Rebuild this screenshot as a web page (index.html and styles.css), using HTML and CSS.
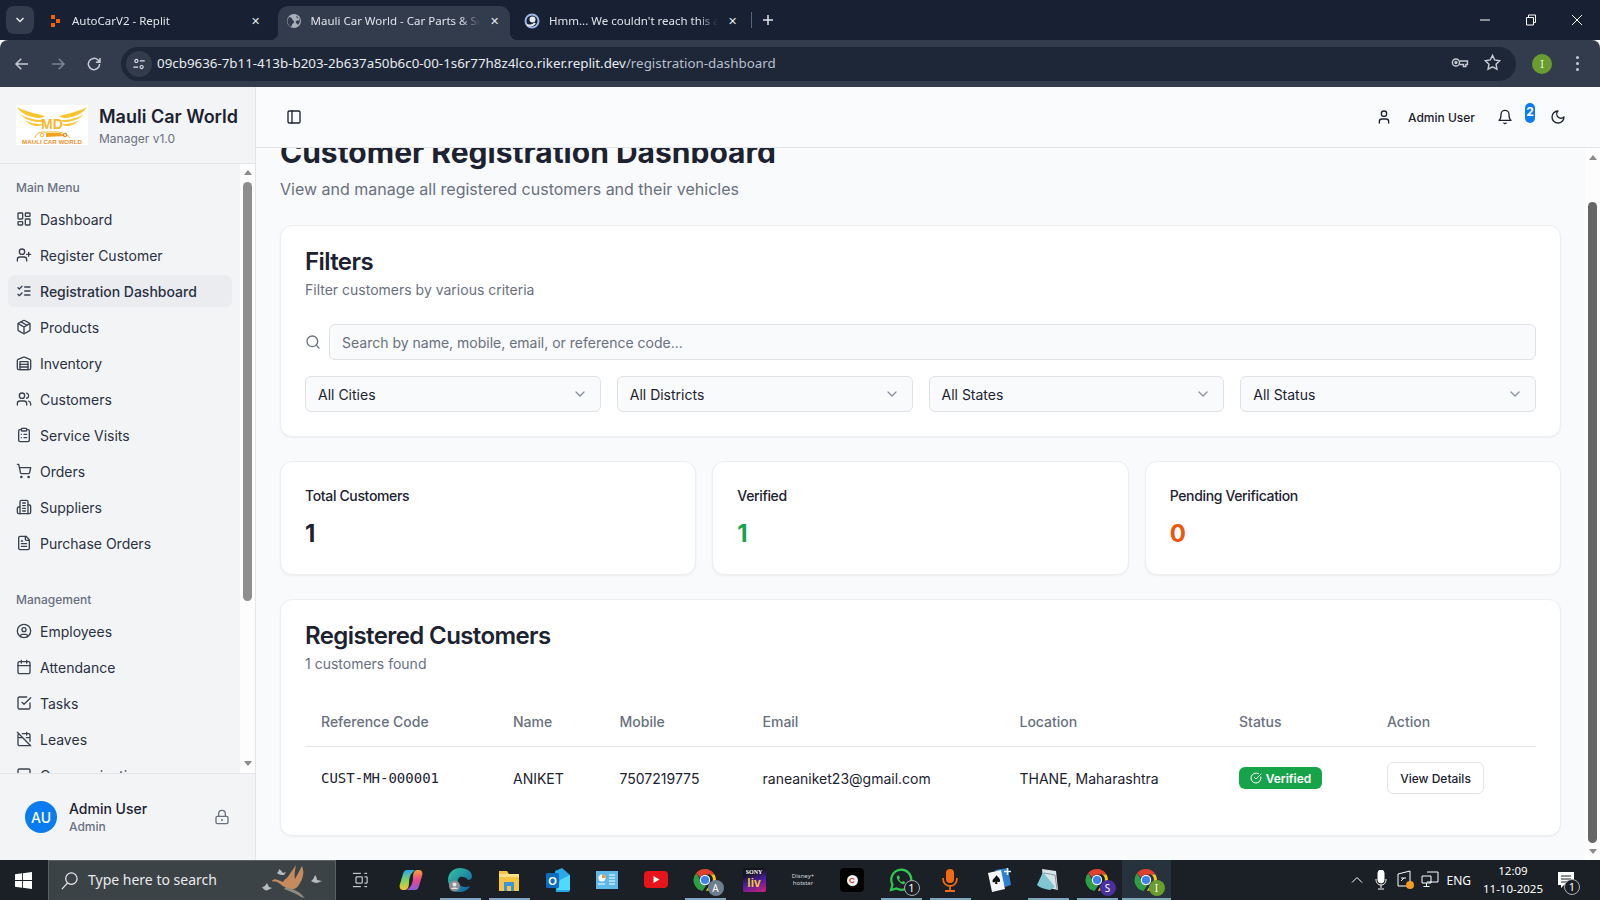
FILE: index.html
```html
<!DOCTYPE html>
<html lang="en">
<head>
    <meta charset="UTF-8">
    <meta name="viewport" content="width=device-width, initial-scale=1.0">
    <title>Mauli Car World - Car Parts &amp; Service</title>
    <link rel="stylesheet" href="styles.css">
</head>
<body>
    <!-- icon set -->
    <svg class="sprite" xmlns="http://www.w3.org/2000/svg">
        <symbol id="i-dashboard" viewBox="0 0 24 24"><rect x="3" y="3" width="7" height="9" rx="1"/><rect x="14" y="3" width="7" height="5" rx="1"/><rect x="14" y="12" width="7" height="9" rx="1"/><rect x="3" y="16" width="7" height="5" rx="1"/></symbol>
        <symbol id="i-user-plus" viewBox="0 0 24 24"><path d="M16 21v-2a4 4 0 0 0-4-4H6a4 4 0 0 0-4 4v2"/><circle cx="9" cy="7" r="4"/><path d="M19 8v6M22 11h-6"/></symbol>
        <symbol id="i-list-checks" viewBox="0 0 24 24"><path d="m3 17 2 2 4-4M3 7l2 2 4-4M13 6h8M13 12h8M13 18h8"/></symbol>
        <symbol id="i-package" viewBox="0 0 24 24"><path d="M11 21.73a2 2 0 0 0 2 0l7-4A2 2 0 0 0 21 16V8a2 2 0 0 0-1-1.73l-7-4a2 2 0 0 0-2 0l-7 4A2 2 0 0 0 3 8v8a2 2 0 0 0 1 1.73z"/><path d="M12 22V12M3.3 7l8.7 5 8.7-5M7.5 4.27l9 5.15"/></symbol>
        <symbol id="i-warehouse" viewBox="0 0 24 24"><path d="M22 8.35V20a2 2 0 0 1-2 2H4a2 2 0 0 1-2-2V8.35A2 2 0 0 1 3.26 6.5l8-3.2a2 2 0 0 1 1.48 0l8 3.2A2 2 0 0 1 22 8.35Z"/><path d="M6 18h12M6 14h12"/><rect x="6" y="10" width="12" height="12"/></symbol>
        <symbol id="i-users" viewBox="0 0 24 24"><path d="M16 21v-2a4 4 0 0 0-4-4H6a4 4 0 0 0-4 4v2"/><circle cx="9" cy="7" r="4"/><path d="M22 21v-2a4 4 0 0 0-3-3.87M16 3.13a4 4 0 0 1 0 7.75"/></symbol>
        <symbol id="i-clipboard" viewBox="0 0 24 24"><rect x="8" y="2" width="8" height="4" rx="1"/><path d="M16 4h2a2 2 0 0 1 2 2v14a2 2 0 0 1-2 2H6a2 2 0 0 1-2-2V6a2 2 0 0 1 2-2h2M12 11h4M12 16h4M8 11h.01M8 16h.01"/></symbol>
        <symbol id="i-cart" viewBox="0 0 24 24"><circle cx="8" cy="21" r="1"/><circle cx="19" cy="21" r="1"/><path d="M2.05 2.05h2l2.66 12.42a2 2 0 0 0 2 1.58h9.78a2 2 0 0 0 1.95-1.57l1.65-7.43H5.12"/></symbol>
        <symbol id="i-building" viewBox="0 0 24 24"><path d="M6 22V4a2 2 0 0 1 2-2h8a2 2 0 0 1 2 2v18Z"/><path d="M6 12H4a2 2 0 0 0-2 2v6a2 2 0 0 0 2 2h2M18 9h2a2 2 0 0 1 2 2v9a2 2 0 0 1-2 2h-2M10 6h4M10 10h4M10 14h4M10 18h4"/></symbol>
        <symbol id="i-file" viewBox="0 0 24 24"><path d="M15 2H6a2 2 0 0 0-2 2v16a2 2 0 0 0 2 2h12a2 2 0 0 0 2-2V7Z"/><path d="M14 2v4a2 2 0 0 0 2 2h4M10 9H8M16 13H8M16 17H8"/></symbol>
        <symbol id="i-circle-user" viewBox="0 0 24 24"><circle cx="12" cy="12" r="10"/><circle cx="12" cy="10" r="3"/><path d="M7 20.662V19a2 2 0 0 1 2-2h6a2 2 0 0 1 2 2v1.662"/></symbol>
        <symbol id="i-calendar" viewBox="0 0 24 24"><path d="M8 2v4M16 2v4M3 10h18"/><rect x="3" y="4" width="18" height="18" rx="2"/></symbol>
        <symbol id="i-check-square" viewBox="0 0 24 24"><path d="m9 11 3 3L22 4"/><path d="M21 12v7a2 2 0 0 1-2 2H5a2 2 0 0 1-2-2V5a2 2 0 0 1 2-2h11"/></symbol>
        <symbol id="i-calendar-off" viewBox="0 0 24 24"><path d="M4.2 4.2A2 2 0 0 0 3 6v14a2 2 0 0 0 2 2h14a2 2 0 0 0 1.82-1.18M21 15.5V6a2 2 0 0 0-2-2H9.5M16 2v4M3 10h7M21 10h-5.5M2 2l20 20"/></symbol>
        <symbol id="i-message" viewBox="0 0 24 24"><path d="M21 15a2 2 0 0 1-2 2H7l-4 4V5a2 2 0 0 1 2-2h14a2 2 0 0 1 2 2z"/></symbol>
        <symbol id="i-chevron" viewBox="0 0 24 24"><path d="m6 9 6 6 6-6"/></symbol>
        <symbol id="i-chrome" viewBox="0 0 24 24">
            <path d="M12 1a11 11 0 0 1 9.5 5.5H12a5.5 5.5 0 0 0-5 3.2L3.2 5A11 11 0 0 1 12 1Z" fill="#e0412f"/>
            <path d="M21.5 6.5A11 11 0 0 1 12.8 23l4-6.6a5.5 5.5 0 0 0 0-9.9Z" fill="#f5c518"/>
            <path d="M3.2 5 7.6 12.6a5.5 5.5 0 0 0 5.6 4.8L9.5 23A11 11 0 0 1 3.2 5Z" fill="#2f9e44"/>
            <circle cx="12" cy="12" r="5.2" fill="#fff"/>
            <circle cx="12" cy="12" r="4.1" fill="#3f82ee"/>
        </symbol>
        <symbol id="i-wing" viewBox="0 0 36 24">
            <path d="M1 2C8 6 18 8 29 11 26 13 24 13 22 13 14 12 5 9 1 2Z"/>
            <path d="M4 9C10 13 18 15 27 15 26 17 24 17 21 17 14 16 8 14 4 9Z"/>
            <path d="M9 15C13 18 19 19 26 19 25 21 22 21 19 21 15 20 11 18 9 15Z"/>
        </symbol>
    </svg>

    <!-- browser tabs -->
    <div class="tabstrip">
        <button class="tab-menu"><svg class="icon-10" viewBox="0 0 24 24"><path d="m5 8 7 7 7-7"/></svg></button>
        <div class="tab">
            <svg class="tab-icon" viewBox="0 0 16 16"><path d="M4 2h4v4H4zM9 6h4v4H9zM4 10h4v4H4z" fill="#f26207"/></svg>
            <span class="tab-title">AutoCarV2 - Replit</span>
            <span class="tab-close">&#10005;</span>
        </div>
        <div class="tab tab-active">
            <svg class="tab-icon" viewBox="0 0 16 16"><circle cx="8" cy="8" r="7" fill="#aab0ba"/><path d="M3 4c2 0 3 1 3 2s2 1 2 3-2 1-2 3l-1 2C3 13 1 10 1.500 7ZM10 2c1 1 0 2 1 3s3 0 3.500 1.500C13 8 11 7 10 8s1 3 2 4c1-1 2-3 2-5" fill="#333c4d"/></svg>
            <span class="tab-title">Mauli Car World - Car Parts &amp; Service</span>
            <span class="tab-close">&#10005;</span>
        </div>
        <div class="tab">
            <svg class="tab-icon" viewBox="0 0 16 16"><circle cx="8" cy="8" r="6.500" fill="none" stroke="#9db8e8" stroke-width="2"/><circle cx="8.500" cy="6.500" r="3" fill="#e6e9ef"/><path d="M3 12c3 1 6 1 8-2" stroke="#e6e9ef" stroke-width="2" fill="none"/></svg>
            <span class="tab-title">Hmm... We couldn't reach this app</span>
            <span class="tab-close">&#10005;</span>
        </div>
        <span class="tab-sep"></span>
        <svg class="tab-new" viewBox="0 0 12 12"><path d="M6 1v10M1 6h10"/></svg>
        <div class="win-btns">
            <svg viewBox="0 0 12 12"><path d="M1 6h10"/></svg>
            <svg viewBox="0 0 12 12"><path d="M1.500 3.500h7v7.500h-7zM3.500 3.500V1h7v7.500H8.500"/></svg>
            <svg viewBox="0 0 12 12"><path d="m1 1 10 10M11 1 1 11"/></svg>
        </div>
    </div>

    <!-- address bar -->
    <div class="toolbar">
        <svg class="nav-btn" viewBox="0 0 24 24"><path d="M20 12H5M11 5l-7 7 7 7"/></svg>
        <svg class="nav-btn nav-off" viewBox="0 0 24 24"><path d="M4 12h15M13 5l7 7-7 7"/></svg>
        <svg class="nav-btn" viewBox="0 0 24 24"><path d="M19.500 12a7.500 7.500 0 1 1-2.200-5.300L20 9.500M20 4v5.500h-5.500"/></svg>
        <div class="urlbar">
            <span class="site-btn">
                <svg viewBox="0 0 16 16"><circle cx="5" cy="4.500" r="1.800"/><path d="M9 4.500h5.500M1.500 11.500H7"/><circle cx="11" cy="11.500" r="1.800"/></svg>
            </span>
            <span class="url">09cb9636-7b11-413b-b203-2b637a50b6c0-00-1s6r77h8z4lco.riker.replit.dev<span class="url-path">/registration-dashboard</span></span>
            <svg class="url-icon" viewBox="0 0 24 24"><circle cx="7.500" cy="12" r="4.500"/><circle cx="7.500" cy="12" r="1.200"/><path d="M12 10h10v4.500h-2V17h-3v-2.500h-5"/></svg>
            <svg class="url-icon" viewBox="0 0 24 24"><path d="m12 3 2.800 5.800 6.200.9-4.500 4.400 1.100 6.300L12 17.400l-5.600 3 1.100-6.300L3 9.700l6.200-.9Z"/></svg>
        </div>
        <span class="profile">I</span>
        <span class="kebab"><i></i><i></i><i></i></span>
    </div>

    <div class="app">
        <aside class="sidebar">
            <div class="brand">
                <svg class="logo" viewBox="0 0 72 40">
                    <rect width="72" height="40" fill="#fff"/>
                    <use href="#i-wing" width="36" height="24" fill="#f9c430"/>
                    <use href="#i-wing" width="36" height="24" fill="#f9c430" transform="matrix(-1 0 0 1 72 0)"/>
                    <text x="36" y="24" text-anchor="middle" class="logo-md">MD</text>
                    <path d="M19 33c1-4 4-6 8-6h14c4 0 10 2 13 6" fill="none" stroke="#f4b531" stroke-width="1"/>
                    <path d="M30 28h14l5 3-19 1Z" fill="#f2a224"/>
                    <circle cx="26" cy="30" r="1.800" fill="none" stroke="#f4b531"/>
                    <circle cx="49" cy="30" r="1.800" fill="none" stroke="#e8752b"/>
                    <text x="36" y="39" text-anchor="middle" class="logo-name">MAULI CAR WORLD</text>
                </svg>
                <div>
                    <div class="brand-name">Mauli Car World</div>
                    <div class="brand-sub">Manager v1.0</div>
                </div>
            </div>

            <div class="side-scroll">
                <nav class="side-nav">
                    <div class="nav-group">
                        <div class="nav-label">Main Menu</div>
                        <a class="nav-item"><svg class="icon"><use href="#i-dashboard"/></svg>Dashboard</a>
                        <a class="nav-item"><svg class="icon"><use href="#i-user-plus"/></svg>Register Customer</a>
                        <a class="nav-item active"><svg class="icon"><use href="#i-list-checks"/></svg>Registration Dashboard</a>
                        <a class="nav-item"><svg class="icon"><use href="#i-package"/></svg>Products</a>
                        <a class="nav-item"><svg class="icon"><use href="#i-warehouse"/></svg>Inventory</a>
                        <a class="nav-item"><svg class="icon"><use href="#i-users"/></svg>Customers</a>
                        <a class="nav-item"><svg class="icon"><use href="#i-clipboard"/></svg>Service Visits</a>
                        <a class="nav-item"><svg class="icon"><use href="#i-cart"/></svg>Orders</a>
                        <a class="nav-item"><svg class="icon"><use href="#i-building"/></svg>Suppliers</a>
                        <a class="nav-item"><svg class="icon"><use href="#i-file"/></svg>Purchase Orders</a>
                    </div>
                    <div class="nav-group">
                        <div class="nav-label">Management</div>
                        <a class="nav-item"><svg class="icon"><use href="#i-circle-user"/></svg>Employees</a>
                        <a class="nav-item"><svg class="icon"><use href="#i-calendar"/></svg>Attendance</a>
                        <a class="nav-item"><svg class="icon"><use href="#i-check-square"/></svg>Tasks</a>
                        <a class="nav-item"><svg class="icon"><use href="#i-calendar-off"/></svg>Leaves</a>
                        <a class="nav-item"><svg class="icon"><use href="#i-message"/></svg>Communication</a>
                    </div>
                </nav>
                <div class="scrollbar side-bar">
                    <span class="arrow-up"></span>
                    <span class="thumb"></span>
                    <span class="arrow-down"></span>
                </div>
            </div>

            <div class="side-user">
                <span class="avatar">AU</span>
                <div class="side-user-text">
                    <div class="side-user-name">Admin User</div>
                    <div class="side-user-role">Admin</div>
                </div>
                <svg class="icon lock" viewBox="0 0 24 24"><rect x="3" y="11" width="18" height="11" rx="2"/><path d="M7 11V7a5 5 0 0 1 10 0v4"/><circle cx="12" cy="16.500" r=".6"/></svg>
            </div>
        </aside>

        <div class="main">
            <header class="topbar">
                <svg class="icon panel-btn" viewBox="0 0 24 24"><rect x="3" y="3" width="18" height="18" rx="2"/><path d="M9 3v18"/></svg>
                <div class="topbar-right">
                    <svg class="icon" viewBox="0 0 24 24"><path d="M19 21v-2a4 4 0 0 0-4-4H9a4 4 0 0 0-4 4v2"/><circle cx="12" cy="7" r="4"/></svg>
                    <span class="topbar-user">Admin User</span>
                    <span class="bell">
                        <svg class="icon" viewBox="0 0 24 24"><path d="M6 8a6 6 0 0 1 12 0c0 7 3 9 3 9H3s3-2 3-9"/><path d="M10.300 21a1.940 1.940 0 0 0 3.400 0"/></svg>
                        <span class="bell-badge">2</span>
                    </span>
                    <svg class="icon moon" viewBox="0 0 24 24"><path d="M12 3a6 6 0 0 0 9 9 9 9 0 1 1-9-9Z"/></svg>
                </div>
            </header>

            <div class="page-wrap">
                <main class="page">
                    <h1>Customer Registration Dashboard</h1>
                    <p class="page-sub">View and manage all registered customers and their vehicles</p>

                    <section class="card filters">
                        <h2>Filters</h2>
                        <p class="card-sub">Filter customers by various criteria</p>
                        <div class="search-row">
                            <svg class="icon search-icon" viewBox="0 0 24 24"><circle cx="11" cy="11" r="8"/><path d="m21 21-4.300-4.300"/></svg>
                            <div class="field search-field">Search by name, mobile, email, or reference code...</div>
                        </div>
                        <div class="select-row">
                            <div class="field select">All Cities<svg class="icon chev"><use href="#i-chevron"/></svg></div>
                            <div class="field select">All Districts<svg class="icon chev"><use href="#i-chevron"/></svg></div>
                            <div class="field select">All States<svg class="icon chev"><use href="#i-chevron"/></svg></div>
                            <div class="field select">All Status<svg class="icon chev"><use href="#i-chevron"/></svg></div>
                        </div>
                    </section>

                    <section class="stats">
                        <div class="card stat">
                            <div class="stat-label">Total Customers</div>
                            <div class="stat-value">1</div>
                        </div>
                        <div class="card stat">
                            <div class="stat-label">Verified</div>
                            <div class="stat-value green">1</div>
                        </div>
                        <div class="card stat">
                            <div class="stat-label">Pending Verification</div>
                            <div class="stat-value orange">0</div>
                        </div>
                    </section>

                    <section class="card customers">
                        <h2>Registered Customers</h2>
                        <p class="card-sub">1 customers found</p>
                        <table class="table">
                            <colgroup>
                                <col class="col-ref"><col class="col-name"><col class="col-mobile"><col class="col-email"><col class="col-loc"><col class="col-status"><col class="col-action">
                            </colgroup>
                            <thead>
                                <tr><th>Reference Code</th><th>Name</th><th>Mobile</th><th>Email</th><th>Location</th><th>Status</th><th>Action</th></tr>
                            </thead>
                            <tbody>
                                <tr>
                                    <td class="mono">CUST-MH-000001</td>
                                    <td>ANIKET</td>
                                    <td>7507219775</td>
                                    <td>raneaniket23@gmail.com</td>
                                    <td>THANE, Maharashtra</td>
                                    <td><span class="badge"><svg class="icon-12" viewBox="0 0 24 24"><path d="M21.801 10A10 10 0 1 1 17 3.335"/><path d="m9 11 3 3L22 4"/></svg>Verified</span></td>
                                    <td><button class="btn">View Details</button></td>
                                </tr>
                            </tbody>
                        </table>
                    </section>
                </main>
                <div class="scrollbar page-bar">
                    <span class="arrow-up"></span>
                    <span class="thumb"></span>
                    <span class="arrow-down"></span>
                </div>
            </div>
        </div>
    </div>

    <!-- windows taskbar -->
    <div class="taskbar">
        <svg class="start" viewBox="0 0 18 18"><path d="M0 2.500 7.400 1.400v7.200H0ZM8.300 1.300 18 0v8.600H8.300ZM0 9.500h7.400v7.200L0 15.600ZM8.300 9.500H18V18l-9.700-1.400Z" fill="#fff"/></svg>
        <div class="task-search">
            <svg class="task-search-icon" viewBox="0 0 20 20"><circle cx="12" cy="8" r="6"/><path d="M8 12.500 2 19"/></svg>
            <span>Type here to search</span>
            <svg class="goose" viewBox="0 0 72 36">
                <path d="M22 6c2 1 3 3 4 4l3-1-2 3c-2 0-5 0-7-2 1-1 2-2 2-4Z" fill="#b8bcc0"/>
                <path d="M5 24c2 0 3-1 5-4l2 4 3 1-4 2c-2 1-4 0-6-3Z" fill="#b8bcc0"/>
                <path d="M58 12c1 1 2 3 2 5l5 1-5 2c-2 0-4-1-6-2 2-1 3-3 4-6Z" fill="#b8bcc0"/>
                <path d="M39 2c-1 5-2 10-1 14l7-13c2 5 2 11-2 17-2 4-5 7-10 6-6-1-9-5-13-7-2-1-4 0-5-1 1-2 4-2 6-1l5 2c1-2 2-3 4-4 3-4 6-9 9-13Z" fill="#c58a5e"/>
                <path d="M27 26c5 2 11 4 17 8l4 1-5-5c-4-3-10-5-14-6Z" fill="#8e8a7e"/>
            </svg>
        </div>
        <span class="task-cell task-view">
            <svg viewBox="0 0 18 18"><path d="M4.500 5.500h7v7h-7zM1 1.500h9M1 16.500h9M14 1.500h3M14 16.500h3M14 5.500h3v7h-3"/></svg>
        </span>
        <span class="task-cell">
            <svg viewBox="0 0 24 24">
                <defs>
                    <linearGradient id="cp" x1="0" y1="0" x2="0" y2="1"><stop offset="0" stop-color="#27a7e7"/><stop offset=".55" stop-color="#86d35a"/><stop offset="1" stop-color="#f9c22e"/></linearGradient>
                    <linearGradient id="cp2" x1="0" y1="0" x2="0" y2="1"><stop offset="0" stop-color="#f9a13a"/><stop offset=".5" stop-color="#e8478b"/><stop offset="1" stop-color="#8a5be0"/></linearGradient>
                </defs>
                <path d="M8 2h8l-3 3c-2 2-3 6-3 10 0 3-1 7-4 7H4c-3 0-4-3-3-6l3-10C5 3 6 2 8 2Z" fill="url(#cp)"/>
                <path d="M16 22H8l3-3c2-2 3-6 3-10 0-3 1-7 4-7h2c3 0 4 3 3 6l-3 10c-1 3-2 4-4 4Z" fill="url(#cp2)"/>
            </svg>
        </span>
        <span class="task-cell running">
            <svg viewBox="0 0 24 24">
                <defs><linearGradient id="ed" x1="0" y1="0" x2="1" y2="1"><stop offset="0" stop-color="#36c5a0"/><stop offset="1" stop-color="#0c59a4"/></linearGradient></defs>
                <path d="M12 0C5 0 0 5 0 12c0 6 5 12 11 12 5 0 9-2 11-6-4 2-10 1-12-3-1-2 0-5 2-6 3-1 7 1 8 3 2 0 4-1 4-4C24 4 19 0 12 0Z" fill="url(#ed)"/>
                <circle cx="6.500" cy="18" r="5.500" fill="#8d9196"/><circle cx="6.500" cy="16.500" r="2" fill="#e4e6e8"/><path d="M3 21c1-2 6-2 7 0Z" fill="#e4e6e8"/>
            </svg>
        </span>
        <span class="task-cell running">
            <svg viewBox="0 0 24 24"><path d="M2 3h8l2 3h10v17H2Z" fill="#f6c544"/><path d="M2 6h20v3H2Z" fill="#fbe08a"/><path d="M7 23v-9h10v9h-3v-5h-4v5Z" fill="#3a96d8"/></svg>
        </span>
        <span class="task-cell">
            <svg viewBox="0 0 24 24"><path d="M9 3l7-3 8 7v15a2 2 0 0 1-2 2H10Z" fill="#28a8ea"/><path d="M14 12l10-5v15H11Z" fill="#50d9ff"/><rect y="5" width="13" height="15" rx="1.500" fill="#0f6cbd"/><text x="6.500" y="16.500" text-anchor="middle" class="task-o">O</text></svg>
        </span>
        <span class="task-cell">
            <svg viewBox="0 0 24 24"><rect x="1" y="3" width="22" height="18" fill="#5fb9e8"/><circle cx="7" cy="10" r="3.500" fill="#fff"/><path d="M7 10V6.500A3.500 3.500 0 0 1 10.500 10Z" fill="#f39a2b"/><path d="M3 16h7M14 7h6M14 10h6M14 13h6M14 16h6" stroke="#fff" stroke-width="1.200"/></svg>
        </span>
        <span class="task-cell">
            <svg viewBox="0 0 24 24"><rect y="3" width="24" height="17" rx="4" fill="#e8141c"/><path d="m9.500 8 6 3.500-6 3.500Z" fill="#fff"/></svg>
        </span>
        <span class="task-cell running">
            <svg viewBox="0 0 24 24"><use href="#i-chrome"/></svg>
            <span class="task-dot dot-a">A</span>
        </span>
        <span class="task-cell">
            <span class="sony"><b>SONY</b><em>liv</em></span>
        </span>
        <span class="task-cell">
            <span class="hotstar">Disney+<br>hotstar</span>
        </span>
        <span class="task-cell">
            <span class="black-app"><i>C</i></span>
        </span>
        <span class="task-cell running">
            <svg viewBox="0 0 24 24"><path d="M2 22l1.500-5.500A10 10 0 1 1 7.500 20.500Z" fill="none" stroke="#2fc94f" stroke-width="2.200"/><path d="M8.500 7.500c-1 1-1 3 1 5.500s4 3.500 5.500 3c1-.5 1.500-1.500 1-2l-2-1-1 1c-1 0-3-2-3-3l1-1-1-2.500Z" fill="#2fc94f"/></svg>
            <span class="task-dot dot-count">1</span>
        </span>
        <span class="task-cell running">
            <svg viewBox="0 0 24 24"><rect x="8" y="1" width="8" height="14" rx="4" fill="#f26a13"/><path d="M5 10c0 5 3 8 7 8s7-3 7-8M12 18v4M7 23h10" fill="none" stroke="#f26a13" stroke-width="1.800"/></svg>
        </span>
        <span class="task-cell">
            <svg viewBox="0 0 24 24"><path d="m8 2 13-2 3 17-6 2Z" fill="#2f7fd0"/><path d="M1 5l13-3 4 19-13 3Z" fill="#f3f5f7"/><path d="M9.500 7c1 2 4 3.500 3.500 6-.3 1.500-2 1.500-3 .5l.5 2.500H8l.5-2.500c-1 1.300-3 1.300-3-.5 0-2 3-3.500 4-6Z" fill="#111"/><path d="M20.500 0v7M17 3.500h7" stroke="#dff0ff" stroke-width="1.600"/></svg>
        </span>
        <span class="task-cell running">
            <svg viewBox="0 0 24 24"><path d="M6 1l14 2 2 19-14-3Z" fill="#d7e4ea"/><path d="M7 4l-6 13c3 3 8 4 13 5l5-3Z" fill="#7fc6d2"/><path d="M8 5l11 2 2 14" fill="none" stroke="#8d979c"/></svg>
        </span>
        <span class="task-cell running">
            <svg viewBox="0 0 24 24"><use href="#i-chrome"/></svg>
            <span class="task-dot dot-s">S</span>
        </span>
        <span class="task-cell running current">
            <svg viewBox="0 0 24 24"><use href="#i-chrome"/></svg>
            <span class="task-dot dot-i">I</span>
        </span>

        <div class="tray">
            <svg class="tray-chev" viewBox="0 0 12 12"><path d="m1 8.500 5-5 5 5"/></svg>
            <svg class="tray-mic" viewBox="0 0 12 20"><rect x="3" y="0" width="6" height="13" rx="3" fill="#fff"/><path d="M1 9c0 4 2 6 5 6s5-2 5-6M6 15v3M3 19h6"/></svg>
            <svg class="tray-icon" viewBox="0 0 18 20"><path d="M1 4 13 1v15H1ZM4 8h5M4 11l3-3"/><circle cx="13" cy="15" r="4" fill="#f59a23" stroke="none"/></svg>
            <svg class="tray-icon tray-net" viewBox="0 0 18 20"><path d="M6 2h11v10H6M1 6h9v7H1ZM5.500 13v3M2.500 16.500h6"/></svg>
            <span class="tray-lang">ENG</span>
            <div class="tray-clock"><span>12:09</span><span>11-10-2025</span></div>
            <span class="tray-note">
                <svg viewBox="0 0 18 18"><path d="M1 1h16v13H7l-3 3v-3H1Z" fill="#fff"/><path d="M4 5h10M4 8h10M4 11h7" stroke="#1a2026" stroke-width="1.200"/></svg>
                <span class="task-dot dot-count note-count">1</span>
            </span>
        </div>
    </div>
</body>
</html>
```

FILE: styles.css
```css
* {
    box-sizing: border-box;
}

html, body {
    margin: 0;
    height: 100%;
}

body {
    width: 1600px;
    height: 900px;
    display: flex;
    flex-direction: column;
    overflow: hidden;
    font-family: Inter, "Liberation Sans", sans-serif;
    color: #1c2230;
    background: #f9fafb;
}

.sprite {
    display: none;
}

.icon {
    width: 16px;
    height: 16px;
    flex: none;
    fill: none;
    stroke: currentColor;
    stroke-width: 2;
    stroke-linecap: round;
    stroke-linejoin: round;
}

/* browser chrome */
.tabstrip {
    height: 40px;
    flex: none;
    display: flex;
    align-items: flex-end;
    background: #182133;
    color: #dfe3ea;
    font-family: "Noto Sans", sans-serif;
    font-size: 11.500px;
}

.tab-menu {
    width: 28px;
    height: 28px;
    margin: 0 5px 6px 6px;
    padding: 0;
    border: 0;
    border-radius: 8px;
    background: #333c4d;
    display: flex;
    align-items: center;
    justify-content: center;
}

.icon-10 {
    width: 12px;
    height: 12px;
    fill: none;
    stroke: #e8ebf0;
    stroke-width: 3;
}

.tab {
    position: relative;
    width: 232px;
    height: 34px;
    margin-right: 6.500px;
    padding: 0 0 5px 8px;
    display: flex;
    align-items: center;
    border-radius: 10px 10px 0 0;
}

.tab-active {
    background: #333c4d;
}

.tab-active::before,
.tab-active::after {
    content: "";
    position: absolute;
    bottom: 0;
    width: 8px;
    height: 8px;
}

.tab-active::before {
    left: -8px;
    background: radial-gradient(circle at 0 0, transparent 8px, #333c4d 8.500px);
}

.tab-active::after {
    right: -8px;
    background: radial-gradient(circle at 100% 0, transparent 8px, #333c4d 8.500px);
}

.tab-icon {
    width: 16px;
    height: 16px;
    flex: none;
    margin-right: 9px;
}

.tab-title {
    width: 169px;
    white-space: nowrap;
    overflow: hidden;
    -webkit-mask-image: linear-gradient(to right, #000 88%, transparent);
    mask-image: linear-gradient(to right, #000 88%, transparent);
}

.tab-close {
    margin-left: 10px;
    font-size: 11px;
    color: #e4e7ec;
}

.tab-sep {
    width: 1px;
    height: 16px;
    margin: 0 0 12px -4px;
    background: #5a6374;
}

.tab-new {
    width: 12px;
    height: 12px;
    margin: 0 0 14px 10px;
    fill: none;
    stroke: #dfe3ea;
    stroke-width: 1.500;
}

.win-btns {
    margin-left: auto;
    margin-bottom: 14px;
    display: flex;
    gap: 34px;
    padding-right: 17px;
}

.win-btns svg {
    width: 12px;
    height: 12px;
    fill: none;
    stroke: #fff;
    stroke-width: 1;
}

.toolbar {
    height: 47px;
    flex: none;
    display: flex;
    align-items: center;
    padding: 0 13px;
    background: #333c4d;
    border-radius: 8px 8px 0 0;
}

.nav-btn {
    width: 18px;
    height: 18px;
    margin-right: 18px;
    fill: none;
    stroke: #c6cbd4;
    stroke-width: 2;
}

.nav-off {
    stroke: #7c8493;
}

.urlbar {
    width: 1395px;
    height: 34px;
    flex: none;
    display: flex;
    align-items: center;
    padding: 0 14px 2px 5px;
    border-radius: 17px;
    background: #1e2738;
    color: #e8ebf0;
    font-family: "Noto Sans", sans-serif;
    font-size: 13.350px;
}

.site-btn {
    width: 26px;
    height: 26px;
    margin: 2px 5px 0 0;
    border-radius: 50%;
    background: #333c4d;
    display: flex;
    align-items: center;
    justify-content: center;
}

.site-btn svg {
    width: 14px;
    height: 14px;
    fill: none;
    stroke: #dfe3ea;
    stroke-width: 1.300;
}

.url {
    flex: 1;
    white-space: nowrap;
}

.url-path {
    color: #b8bfcb;
}

.url-icon {
    width: 19px;
    height: 19px;
    margin-left: 14px;
    fill: none;
    stroke: #c6cbd4;
    stroke-width: 1.800;
}

.profile {
    width: 20px;
    height: 20px;
    margin-left: 16px;
    border-radius: 50%;
    background: #6a9c2f;
    color: #e9f2dc;
    font: 11px "Noto Sans", sans-serif;
    display: flex;
    align-items: center;
    justify-content: center;
}

.kebab {
    margin-left: 24px;
    display: flex;
    flex-direction: column;
    gap: 3px;
}

.kebab i {
    width: 3px;
    height: 3px;
    border-radius: 50%;
    background: #c6cbd4;
}

/* app shell */
.app {
    height: 773px;
    flex: none;
    display: flex;
}

.sidebar {
    width: 256px;
    flex: none;
    display: flex;
    flex-direction: column;
    background: #f3f4f6;
    border-right: 1px solid #e3e5e9;
}

.brand {
    height: 77px;
    flex: none;
    display: flex;
    align-items: center;
    gap: 11px;
    padding: 0 16px;
    border-bottom: 1px solid #e3e5e9;
}

.logo {
    width: 72px;
    height: 40px;
    flex: none;
}

.logo-md {
    font: 700 14px "Liberation Sans", sans-serif;
    fill: #f7b733;
}

.logo-name {
    font: 700 6.200px "Liberation Sans", sans-serif;
    fill: #ee8f2b;
}

.brand-name {
    font-size: 18px;
    line-height: 28px;
    font-weight: 600;
    white-space: nowrap;
}

.brand-sub {
    font-size: 12px;
    line-height: 16px;
    color: #697080;
}

.side-scroll {
    flex: 1;
    min-height: 0;
    display: flex;
    overflow: hidden;
}

.side-nav {
    flex: 1;
    min-width: 0;
    padding: 7px 8px;
}

.nav-group {
    padding-bottom: 20px;
}

.nav-label {
    height: 32px;
    padding-left: 8px;
    display: flex;
    align-items: center;
    font-size: 12px;
    font-weight: 500;
    color: #697080;
}

.nav-item {
    height: 32px;
    margin-bottom: 4px;
    padding-left: 8px;
    display: flex;
    align-items: center;
    gap: 8px;
    border-radius: 6px;
    font-size: 14px;
    color: #2a3142;
}

.nav-item .icon {
    color: #3a4150;
}

.nav-item.active {
    background: #ebecf0;
    font-weight: 500;
}

.scrollbar {
    width: 15px;
    flex: none;
    display: flex;
    flex-direction: column;
    align-items: center;
    background: #fdfdfd;
}

.arrow-up,
.arrow-down {
    width: 0;
    height: 0;
    flex: none;
    border-left: 4.500px solid transparent;
    border-right: 4.500px solid transparent;
}

.arrow-up {
    border-bottom: 5px solid #8a8a8a;
}

.arrow-down {
    border-top: 5px solid #8a8a8a;
}

.thumb {
    width: 9px;
    border-radius: 4.500px;
}

.side-bar {
    padding-top: 6px;
}

.side-bar .thumb {
    height: 419px;
    margin: 7px 0 160px;
    background: #8e8e8e;
}

.page-bar {
    padding-top: 7px;
}

.page-bar .thumb {
    height: 641px;
    margin: 42px 0 6px;
    background: #666;
}

.side-user {
    height: 87px;
    flex: none;
    display: flex;
    align-items: center;
    padding: 0 25px;
    border-top: 1px solid #e3e5e9;
}

.avatar {
    width: 32px;
    height: 32px;
    flex: none;
    border-radius: 50%;
    background: #0a7cf0;
    color: #fff;
    font-size: 14px;
    font-weight: 500;
    display: flex;
    align-items: center;
    justify-content: center;
}

.side-user-text {
    margin-left: 12px;
    flex: 1;
}

.side-user-name {
    font-size: 14px;
    line-height: 18px;
    font-weight: 500;
}

.side-user-role {
    margin-top: 1px;
    font-size: 12px;
    line-height: 16px;
    font-weight: 500;
    color: #697080;
}

.lock {
    color: #697080;
}

.main {
    flex: 1;
    min-width: 0;
    display: flex;
    flex-direction: column;
}

.topbar {
    height: 61px;
    flex: none;
    display: flex;
    align-items: center;
    justify-content: space-between;
    padding: 0 34px 0 30px;
    background: #fafbfc;
    border-bottom: 1px solid #e3e5e9;
}

.topbar-right {
    display: flex;
    align-items: center;
}

.topbar-user {
    margin: 0 22px 0 16px;
    font-size: 12px;
    font-weight: 500;
}

.bell {
    position: relative;
    display: flex;
}

.bell-badge {
    position: absolute;
    left: 28px;
    top: -6px;
    width: 10px;
    height: 20px;
    border-radius: 5px;
    background: #0a7cf0;
    color: #fff;
    font-size: 12px;
    font-weight: 700;
    line-height: 17px;
    text-align: center;
}

.moon {
    margin-left: 37px;
}

.page-wrap {
    flex: 1;
    min-height: 0;
    display: flex;
}

.page {
    flex: 1;
    min-width: 0;
    padding: 0 24px;
    overflow: hidden;
}

/* scrolled down a little, so the heading is cut by the top bar */
h1 {
    margin: -14px 0 0;
    font-size: 30px;
    line-height: 36px;
    font-weight: 700;
}

.page-sub {
    margin: 7px 0 24px;
    font-size: 16px;
    line-height: 24px;
    color: #697080;
}

.card {
    background: #fff;
    border: 1px solid #eceef1;
    border-radius: 12px;
    box-shadow: 0 1px 2px rgba(0, 0, 0, 0.05);
}

h2 {
    margin: 0;
    font-size: 24px;
    line-height: 24px;
    font-weight: 600;
    letter-spacing: -0.6px;
}

.card-sub {
    margin: 6px 0 0;
    font-size: 14px;
    line-height: 20px;
    color: #697080;
}

.filters {
    padding: 24px;
}

.search-row {
    margin-top: 24px;
    display: flex;
    align-items: center;
    gap: 8px;
}

.search-icon {
    color: #697080;
}

.field {
    height: 36px;
    display: flex;
    align-items: center;
    padding: 0 12px;
    background: #f9fafb;
    border: 1px solid #e0e2e6;
    border-radius: 6px;
    font-size: 14px;
}

.search-field {
    flex: 1;
    color: #697080;
}

.select-row {
    margin-top: 16px;
    display: grid;
    grid-template-columns: repeat(4, 1fr);
    gap: 16px;
}

.select {
    justify-content: space-between;
}

.chev {
    color: #8b919c;
}

.stats {
    margin-top: 24px;
    display: grid;
    grid-template-columns: repeat(3, 1fr);
    gap: 16px;
}

.stat {
    height: 114px;
    padding: 24px;
}

.stat-label {
    font-size: 14px;
    line-height: 20px;
    font-weight: 500;
    letter-spacing: -0.35px;
}

.stat-value {
    margin-top: 12px;
    font-size: 24px;
    line-height: 32px;
    font-weight: 700;
}

.green {
    color: #16a34a;
}

.orange {
    color: #ea580c;
}

.customers {
    margin-top: 24px;
    padding: 24px 24px 25px;
}

.table {
    width: 100%;
    margin-top: 24px;
    border-collapse: collapse;
    table-layout: fixed;
    font-size: 14px;
}

.col-ref { width: 192px; }
.col-name { width: 106.500px; }
.col-mobile { width: 143px; }
.col-email { width: 257px; }
.col-loc { width: 219.500px; }
.col-status { width: 148px; }

.table th {
    height: 48px;
    padding: 0 16px;
    text-align: left;
    font-weight: 500;
    color: #697080;
    border-bottom: 1px solid #e3e5e9;
}

.table td {
    height: 64px;
    padding: 0 16px;
    white-space: nowrap;
}

.mono {
    font-family: "DejaVu Sans Mono", monospace;
    font-size: 14px;
}

.badge {
    width: 83px;
    height: 22px;
    display: inline-flex;
    align-items: center;
    justify-content: center;
    gap: 4px;
    border-radius: 6px;
    background: #16a34a;
    color: #fff;
    font-size: 12px;
    font-weight: 600;
    vertical-align: middle;
}

.icon-12 {
    width: 12px;
    height: 12px;
    fill: none;
    stroke: #fff;
    stroke-width: 2;
    stroke-linecap: round;
    stroke-linejoin: round;
}

.btn {
    width: 97px;
    height: 32px;
    padding: 0;
    border: 1px solid #e3e5e9;
    border-radius: 6px;
    background: #fff;
    color: #1c2230;
    font: 500 12px Inter, sans-serif;
}

/* windows taskbar */
.taskbar {
    height: 40px;
    flex: none;
    display: flex;
    align-items: center;
    background: #1a2026;
    color: #fff;
    font-family: "Noto Sans", sans-serif;
}

.start {
    width: 17px;
    height: 17px;
    margin: 0 16px 0 15px;
    flex: none;
}

.task-search {
    width: 288px;
    height: 40px;
    flex: none;
    display: flex;
    align-items: center;
    position: relative;
    padding: 0 0 2px 39px;
    background: #3c4347;
    border: 1px solid #5b6266;
    border-bottom: 0;
    font-size: 14px;
    color: #e8eaec;
}

.task-search-icon {
    position: absolute;
    left: 11px;
    top: 10px;
    width: 19px;
    height: 19px;
    fill: none;
    stroke: #e8eaec;
    stroke-width: 1.300;
}

.goose {
    position: absolute;
    right: 6px;
    top: 2px;
    width: 72px;
    height: 36px;
}

.task-cell {
    position: relative;
    width: 49px;
    height: 40px;
    flex: none;
    display: flex;
    align-items: center;
    justify-content: center;
}

.task-cell > svg {
    width: 24px;
    height: 24px;
}

.task-view {
    width: 50.500px;
    padding-right: 3px;
}

.task-view > svg {
    width: 16px;
    height: 16px;
    fill: none;
    stroke: #fff;
    stroke-width: 1;
}

.running::after {
    content: "";
    position: absolute;
    left: 4px;
    right: 4px;
    bottom: 0;
    height: 2px;
    background: #7fa6bd;
}

.current {
    background: #26333c;
}

.current::after {
    left: 0;
    right: 0;
}

.task-dot {
    position: absolute;
    width: 16px;
    height: 16px;
    left: 27px;
    top: 20px;
    border-radius: 50%;
    font-size: 10px;
    line-height: 16px;
    text-align: center;
    color: #fff;
}

.dot-a {
    background: #6d7e8c;
}

.dot-s {
    background: #4a2fa0;
}

.dot-i {
    background: #6a9c2f;
}

.dot-count {
    background: #1a2026;
    border: 1px solid #a9aeb3;
    line-height: 14px;
    font-size: 11px;
}

.sony {
    width: 23px;
    height: 24px;
    display: flex;
    flex-direction: column;
    align-items: center;
    border-radius: 2px;
    background: linear-gradient(160deg, #14141c 25%, #4a1fa0 55%, #d01f7a);
    font-family: "Liberation Serif", serif;
    overflow: hidden;
}

.sony b {
    font-size: 6px;
    line-height: 8px;
}

.sony em {
    font: 700 12px/14px "Liberation Sans", sans-serif;
    color: #f4c534;
}

.hotstar {
    font-size: 6px;
    line-height: 7px;
    text-align: center;
    color: #cfd3d8;
}

.black-app {
    width: 24px;
    height: 24px;
    display: flex;
    align-items: center;
    justify-content: center;
    border-radius: 4px;
    background: #000;
}

.black-app i {
    width: 11px;
    height: 11px;
    border-radius: 50%;
    background: #f2f2f2;
    color: #c33;
    font: 700 8px/11px "Liberation Sans", sans-serif;
    text-align: center;
}

.task-o {
    font: 700 11px "Liberation Sans", sans-serif;
    fill: #fff;
}

.tray {
    margin-left: auto;
    height: 40px;
    display: flex;
    align-items: center;
    color: #fff;
}

.tray svg {
    fill: none;
    stroke: #fff;
    stroke-width: 1;
}

.tray-chev {
    width: 12px;
    height: 12px;
}

.tray-mic {
    width: 12px;
    height: 20px;
    margin-left: 12px;
}

.tray-icon {
    width: 18px;
    height: 20px;
    margin-left: 10px;
}

.tray-net {
    margin-left: 6px;
}

.tray-lang {
    margin-left: 7px;
    font-size: 12px;
}

.tray-clock {
    width: 72px;
    margin-left: 6px;
    padding-bottom: 2px;
    display: flex;
    flex-direction: column;
    align-items: center;
    gap: 3px;
    font-size: 11.500px;
    line-height: 15px;
}

.tray-note {
    position: relative;
    width: 18px;
    height: 18px;
    margin: 0 25px 0 8px;
}

.tray-note svg {
    width: 18px;
    height: 18px;
    stroke: none;
    fill: none;
}

.note-count {
    left: 7px;
    top: 8px;
}
```
